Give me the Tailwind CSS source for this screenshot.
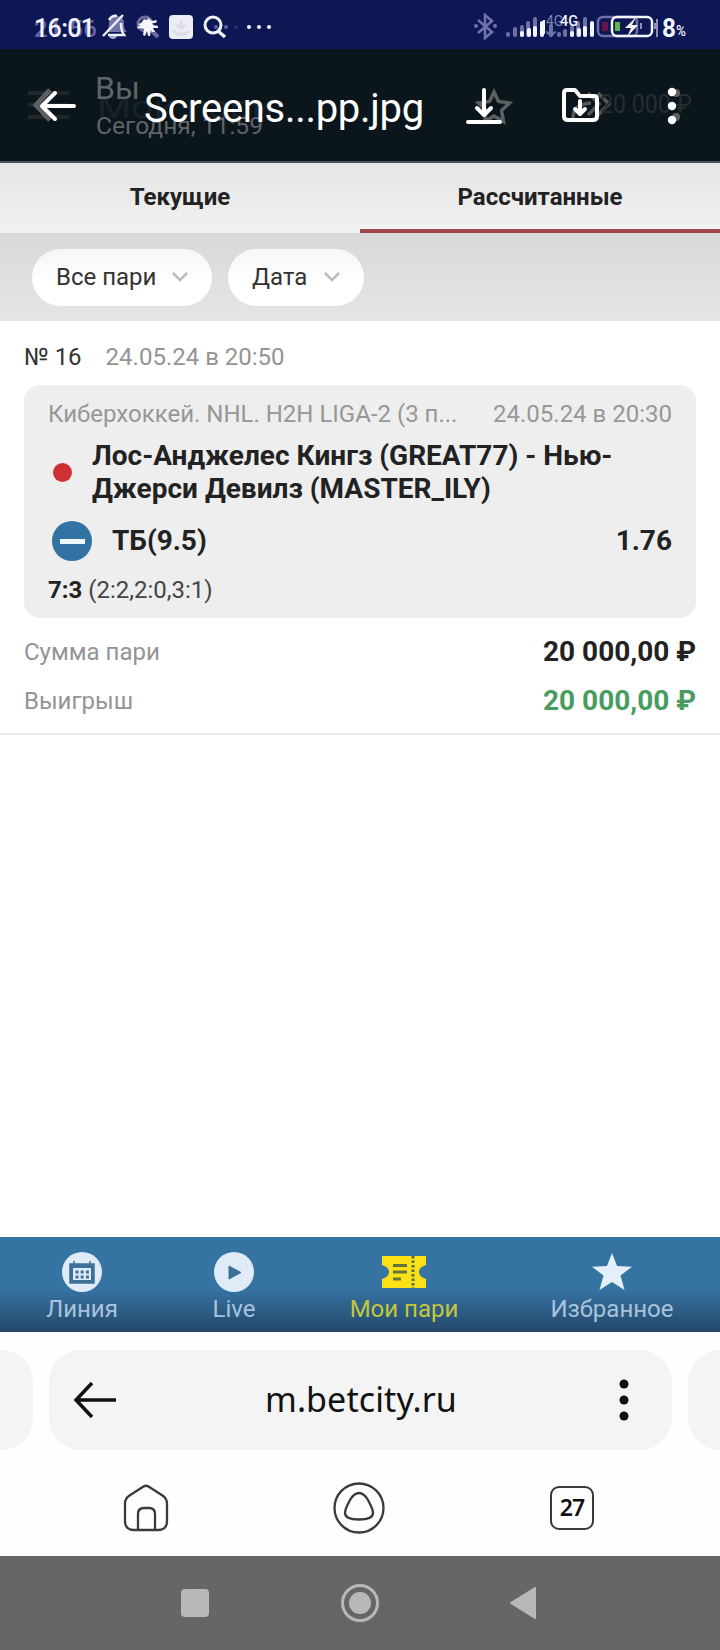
<!DOCTYPE html>
<html lang="ru">
<head>
    <meta charset="UTF-8">
    <meta name="viewport" content="width=device-width, initial-scale=1.0">
    <script src="https://cdn.jsdelivr.net/npm/@tailwindcss/browser@4"></script>
    <title>Мои пари</title>
</head>
<body class="bg-white">
    <div class="w-[720px] h-[1650px] flex flex-col overflow-hidden font-['Roboto','Liberation_Sans',sans-serif] text-[24px] text-[#222]">
        <!--status bar-->
        <div class="h-[49px] shrink-0 bg-[#0c1754]">
            <svg width="720" height="49" viewBox="0 0 720 49" fill="none" font-family="Roboto, sans-serif">
                <text x="34" y="37" font-size="24" font-weight="500" fill="#6264a2" textLength="63">21:56</text>
                <text x="34" y="37" font-size="25" font-weight="500" fill="#f4f4fb" textLength="61">16:01</text>
                <!--bell-->
                <path d="M106 32q3-3 3-9 0-7 8-7 7 0 7 8 0 6 3 8z" fill="#7375aa"/>
                <path d="M109 20q3-5 8-4 M121 23q0 8 3 12H108 M103 36l20-21" stroke="#eeeef8" stroke-width="2.5"/>
                <path d="M109 36h8q-1 3-4 3t-4-3z" fill="#aaaace"/>
                <!--bug-->
                <circle cx="145" cy="24" r="7" stroke="#6a6ba5" stroke-width="3"/>
                <path d="M150 29l8 8" stroke="#6a6ba5" stroke-width="4"/>
                <path d="M144 19l3 1 1-2 4 3 5-1-1 3h-4l1 2 5 1v2h-5l2 4h-3l-1-2-1 6h-2l-1-5-2 5-2-1 1-6-5-1-1 1-1-2 3-1-2-2 3-1z" fill="#f4f4fb"/>
                <rect x="169" y="15" width="24" height="24" rx="4" fill="#ececf4"/>
                <path d="M181 20v9m-4-4l4 4 4-4 M173 31q8 7 16 0" stroke="#dcdce9" stroke-width="2.5"/>
                <circle cx="213" cy="25" r="8" stroke="#f0f0f8" stroke-width="3"/>
                <path d="M218 31l7 6" stroke="#f0f0f8" stroke-width="3.5"/>
                <g fill="#6264a2"><circle cx="216" cy="27" r="2"/><circle cx="226" cy="27" r="2"/><circle cx="236" cy="27" r="2" opacity=".3"/></g>
                <g fill="#f4f4fb"><circle cx="249" cy="27" r="2"/><circle cx="259" cy="27" r="2"/><circle cx="269" cy="27" r="2"/></g>
                <!--bluetooth-->
                <path d="M478 20l14 12-7 6V15l7 6-14 12" stroke="#7072aa" stroke-width="2.6"/>
                <circle cx="476" cy="26" r="2" fill="#7072aa"/><circle cx="495" cy="26" r="2" fill="#7072aa"/>
                <!--signal-->
                <g stroke="#6e70a8" stroke-width="4" stroke-linecap="round">
                    <path d="M508 35v-1M515 35v-6M522 35V27M528 35V23M535 35V19"/>
                    <path d="M551 35V26M559 35v-1M565 35v-4M572 35V27M578 35V23M585 35V19"/>
                    <path d="M547 32l4 4 4-4" stroke-width="2"/>
                </g>
                <g stroke="#f4f4fb" stroke-width="4" stroke-linecap="round">
                    <path d="M522 35v-2M529 35v-5M535 35v-7M542 35V23"/>
                    <path d="M572 35v-2M579 35v-5M585 35v-7M592 35V23"/>
                </g>
                <path d="M544 34V20" stroke="#f4f4fb" stroke-width="2"/>
                <text x="546" y="26" font-size="15" fill="#8183b5" textLength="17" lengthAdjust="spacingAndGlyphs">4G</text>
                <text x="560" y="26" font-size="15" font-weight="500" fill="#f4f4fb" textLength="18" lengthAdjust="spacingAndGlyphs">4G</text>
                <!--battery-->
                <rect x="598" y="17" width="39" height="19" rx="5" stroke="#6e70a8" stroke-width="2.5"/>
                <rect x="602" y="22" width="6" height="9" fill="#651451"/>
                <rect x="612" y="17" width="40" height="19" rx="5" stroke="#f4f4fb" stroke-width="2.5"/>
                <rect x="615" y="22" width="5" height="9" fill="#62b74b"/>
                <path d="M636 17l-11 11h6l-4 9 11-12h-6z" fill="#f4f4fb"/>
                <path d="M641 23v6M655 23v6M657 19v18" stroke="#8d8fbd" stroke-width="2"/>
                <text x="662" y="37" font-size="25" font-weight="700" fill="#f4f4fb" textLength="14" lengthAdjust="spacingAndGlyphs">8</text>
                <text x="676" y="36" font-size="14" font-weight="500" fill="#f4f4fb" textLength="10" lengthAdjust="spacingAndGlyphs">%</text>
            </svg>
        </div>

        <!--viewer header-->
        <div class="relative h-[114px] shrink-0 bg-[#0b151c] border-b-2 border-[#4b545b]">
            <svg class="absolute left-0 top-0" width="720" height="112" viewBox="0 49 720 112" fill="none" font-family="Roboto, sans-serif">
                <path d="M28 93h41M28 105h41M28 117h41" stroke="#20282e" stroke-width="4"/>
                <text x="97" y="118" font-size="31" fill="#192228" textLength="177" lengthAdjust="spacingAndGlyphs">Мои пари</text>
                <text x="95" y="99" font-size="31" fill="#606467" textLength="45" lengthAdjust="spacingAndGlyphs">Вы</text>
                <text x="96" y="134" font-size="24" fill="#606467" textLength="167" lengthAdjust="spacingAndGlyphs">Сегодня, 11:59</text>
                <path d="M50 90L36 105l14 15" stroke="#5c6063" stroke-width="5"/>
                <path d="M494 92l4.5 9.500 11 1.500-8 7.500 2 11-9.500-5.500-9.500 5.500 2-11-8-7.500 11-1.500z" stroke="#5c6063" stroke-width="3.500"/>
                <path d="M573 118q0-14 18-15M588 93l11 11-11 11M598 93l11 11-11 11" stroke="#54585b" stroke-width="3.500"/>
                <text x="600" y="113" font-size="25" fill="#252d32" textLength="92" lengthAdjust="spacingAndGlyphs">20 000 ₽</text>
                <g fill="#5c6063"><circle cx="676" cy="93" r="4"/><circle cx="676" cy="117" r="4"/></g>
            </svg>
            <div class="relative h-full flex items-center pl-[38px] text-white">
                <svg class="shrink-0" width="40" height="36" viewBox="0 0 40 36" fill="none" stroke="#fff" stroke-width="4" stroke-linecap="round" stroke-linejoin="round"><path d="M36 19H4M17 6L4 19l13 13"/></svg>
                <p class="w-[288px] ml-[66px] pt-[8px] text-[40px] leading-[48px] whitespace-nowrap tracking-[-0.3px]">Screens...pp.jpg</p>
                <svg class="ml-[30px]" width="44" height="40" viewBox="462 85 44 40" fill="none" stroke="#fff" stroke-width="4" stroke-linecap="round" stroke-linejoin="round"><path d="M484 90v25M477 108l7 7 7-7M468 122h32"/></svg>
                <svg class="ml-[50px]" width="48" height="40" viewBox="556 85 48 40" fill="none" stroke="#fff" stroke-width="4" stroke-linecap="round" stroke-linejoin="round"><path d="M564 116V93q0-3 3-3h8l5 6h14q3 0 3 3v17q0 4-4 4h-25q-4 0-4-4zM580 101v12M575 109l5 5 5-5"/></svg>
                <svg class="ml-[58px]" width="22" height="42" viewBox="662 84 22 42" fill="#fff"><circle cx="672" cy="92" r="4.200"/><circle cx="672" cy="106" r="4.200"/><circle cx="672" cy="120" r="4.200"/></svg>
            </div>
        </div>

        <!--tabs-->
        <div class="flex h-[70px] shrink-0 bg-linear-to-b from-[#e5e5e5] to-[#f2f2f2] text-center font-bold leading-[68px]">
            <div class="w-1/2">Текущие</div>
            <div class="w-1/2 border-b-4 border-[#a34848] h-[70px]">Рассчитанные</div>
        </div>

        <!--filters-->
        <div class="flex items-center gap-4 h-[88px] shrink-0 pl-8 bg-linear-to-b from-[#d9d9d9] to-[#e5e5e5] text-[#333]">
            <div class="flex items-center justify-between w-[180px] h-[57px] rounded-full bg-linear-to-b from-[#f6f6f6] to-white to-60% pl-6 pr-6">
                <span>Все пари</span>
                <svg width="16" height="10" viewBox="0 0 16 10" fill="none" stroke="#bbb" stroke-width="2.500"><path d="M1 1l7 7 7-7"/></svg>
            </div>
            <div class="flex items-center justify-between w-[136px] h-[57px] rounded-full bg-linear-to-b from-[#f6f6f6] to-white to-60% pl-6 pr-6">
                <span>Дата</span>
                <svg width="16" height="10" viewBox="0 0 16 10" fill="none" stroke="#bbb" stroke-width="2.500"><path d="M1 1l7 7 7-7"/></svg>
            </div>
        </div>

        <!--bet-->
        <div class="h-[414px] shrink-0 px-6 border-b-2 border-[#e9e9e9]">
            <div class="flex gap-6 h-16 pt-[21px] leading-[30px]">
                <span class="text-[#333]">№ 16</span>
                <span class="text-[#949494]">24.05.24 в 20:50</span>
            </div>
            <div class="h-[233px] rounded-2xl bg-[#eee] px-6 pt-[14px]">
                <div class="flex justify-between leading-[30px] text-[#979797]">
                    <span>Киберхоккей. NHL. H2H LIGA-2 (3 п...</span>
                    <span>24.05.24 в 20:30</span>
                </div>
                <div class="flex items-center pl-[5px] mt-[10px]">
                    <div class="size-[19px] rounded-full bg-[#ce3034]"></div>
                    <p class="ml-[20px] text-[28px] leading-[33px] font-bold">Лос-Анджелес Кингз (GREAT77) - Нью-<br>Джерси Девилз (MASTER_ILY)</p>
                </div>
                <div class="flex items-center h-10 mt-[16px] pl-1 text-[28px] font-bold">
                    <div class="size-10 rounded-full bg-[#3273a3] flex items-center justify-center">
                        <div class="w-[25px] h-[5px] bg-[#f0f8ff]"></div>
                    </div>
                    <span class="ml-5">ТБ(9.5)</span>
                    <span class="ml-auto">1.76</span>
                </div>
                <p class="mt-[14px] leading-[30px] text-[#444]"><b class="text-[#222]">7:3</b> (2:2,2:0,3:1)</p>
            </div>
            <div class="flex items-center justify-between h-[49px] mt-[9px]">
                <span class="text-[#949494]">Сумма пари</span>
                <span class="text-[28px] font-bold">20 000,00 ₽</span>
            </div>
            <div class="flex items-center justify-between h-[49px]">
                <span class="text-[#949494]">Выигрыш</span>
                <span class="text-[28px] font-bold text-[#499c60]">20 000,00 ₽</span>
            </div>
        </div>

        <div class="grow"></div>

        <!--site menu-->
        <div class="flex h-[95px] shrink-0 bg-linear-to-b from-[#3573a2] from-55% to-[#24486a] text-[#a9c3dc] leading-[34px] text-center">
            <div class="w-[164px] pt-[15px]">
                <svg class="mx-auto" width="40" height="40" viewBox="0 0 40 40">
                    <circle cx="20" cy="20" r="20" fill="#dfebf7"/>
                    <path d="M8 12h24v19H8zM12 9v4M28 9v4" fill="#3d7199" stroke="#3d7199" stroke-width="1.500"/>
                    <path d="M11 16h18v12H11z" fill="#dfebf7"/>
                    <path d="M13.500 20h14M13.500 25h14" stroke="#3d7199" stroke-width="3" stroke-dasharray="3 2.200"/>
                </svg>
                <p>Линия</p>
            </div>
            <div class="w-[140px] pt-[15px]">
                <svg class="mx-auto" width="40" height="40" viewBox="0 0 40 40"><circle cx="20" cy="20" r="20" fill="#dfebf7"/><path d="M15 14l12 6.500L15 27z" fill="#3d7199" stroke="#3d7199"/></svg>
                <p>Live</p>
            </div>
            <div class="w-[200px] pt-[15px] text-[#c5c73b]">
                <svg class="mx-auto" width="46" height="40" viewBox="0 0 46 40">
                    <path d="M1 4h44v9q-7 2-7 7t7 7v9H1v-9q7-2 7-7t-7-7z" fill="#fbe116"/>
                    <path d="M32 4v32" stroke="#55713f" stroke-width="3" stroke-dasharray="2.500 2"/>
                    <path d="M12 13.500h14M12 20h14M12 27h8" stroke="#66733a" stroke-width="3"/>
                </svg>
                <p>Мои пари</p>
            </div>
            <div class="w-[216px] pt-[15px]">
                <svg class="mx-auto" width="40" height="40" viewBox="0 0 40 40"><path d="M20 1l5 13 15 .800-11.500 8.800L32.500 38 20 30 7.500 38l4-14.400L0 14.800 15 14z" fill="#e3effb"/></svg>
                <p>Избранное</p>
            </div>
        </div>

        <!--browser bar-->
        <div class="h-[224px] shrink-0 bg-[#fefefe] pt-[18px] font-['Noto_Sans',sans-serif] text-[#111]">
            <div class="flex gap-4 h-[100px]">
                <div class="w-[33px] shrink-0 rounded-r-[32px] bg-[#f4f4f4]"></div>
                <div class="w-[623px] shrink-0 rounded-[32px] bg-[#f4f4f4] flex items-center justify-between pl-[24px] pr-[42px]">
                    <svg width="44" height="38" viewBox="0 0 44 38" fill="none" stroke="#111" stroke-width="3.500"><path d="M43 19H3M19 2L3 19l16 17"/></svg>
                    <span class="-ml-[13px] pb-[3px] text-[34px] leading-[40px] tracking-[0.100px]">m.betcity.ru</span>
                    <svg width="12" height="42" viewBox="0 0 12 42" fill="#111"><circle cx="6" cy="5" r="4.500"/><circle cx="6" cy="21" r="4.500"/><circle cx="6" cy="37" r="4.500"/></svg>
                </div>
                <div class="w-8 shrink-0 rounded-l-[32px] bg-[#f4f4f4]"></div>
            </div>
            <div class="flex items-center justify-between h-[52px] mt-[32px] pl-[123px] pr-[126px]">
                <svg width="46" height="48" viewBox="123 1483 46 48" fill="none" stroke="#3a3a3a" stroke-width="2.300"><path d="M143.500 1485.500q2.500-1.500 5 0l14 9q4.500 3 4.500 8V1520q0 9-9 9h-24q-9 0-9-9v-17.500q0-5 4.500-8zM138 1529v-16q0-6 6-6h5q6 0 6 6v16"/></svg>
                <svg class="-ml-[2px]" width="52" height="52" viewBox="0 0 52 52" fill="none" stroke="#3a3a3a" stroke-width="2.300"><circle cx="26" cy="26" r="24.500"/><path d="M26 11c-4 0-6 2-9 7-3 6-5 9-5 13 0 5 5 6.500 14 6.500S40 36 40 31c0-4-2-7-5-13-3-5-5-7-9-7z"/></svg>
                <div class="size-[44px] border-[2.500px] border-[#3a3a3a] rounded-[9px] text-[23px] leading-[39px] text-center font-semibold tracking-[-1px]">27</div>
            </div>
        </div>

        <!--system buttons-->
        <div class="flex items-center h-[94px] shrink-0 bg-[#666] pl-[181px]">
            <div class="size-7 rounded-[4px] bg-[#b8b8b8]"></div>
            <svg class="ml-[131px]" width="40" height="40" viewBox="0 0 40 40"><circle cx="20" cy="20" r="17.500" fill="none" stroke="#b8b8b8" stroke-width="3"/><circle cx="20" cy="20" r="11" fill="#b8b8b8"/></svg>
            <svg class="ml-[129px]" width="28" height="34" viewBox="0 0 28 34"><path d="M2 17L26 2v30z" fill="#b8b8b8" stroke="#b8b8b8" stroke-width="2" stroke-linejoin="round"/></svg>
        </div>
    </div>
</body>
</html>
